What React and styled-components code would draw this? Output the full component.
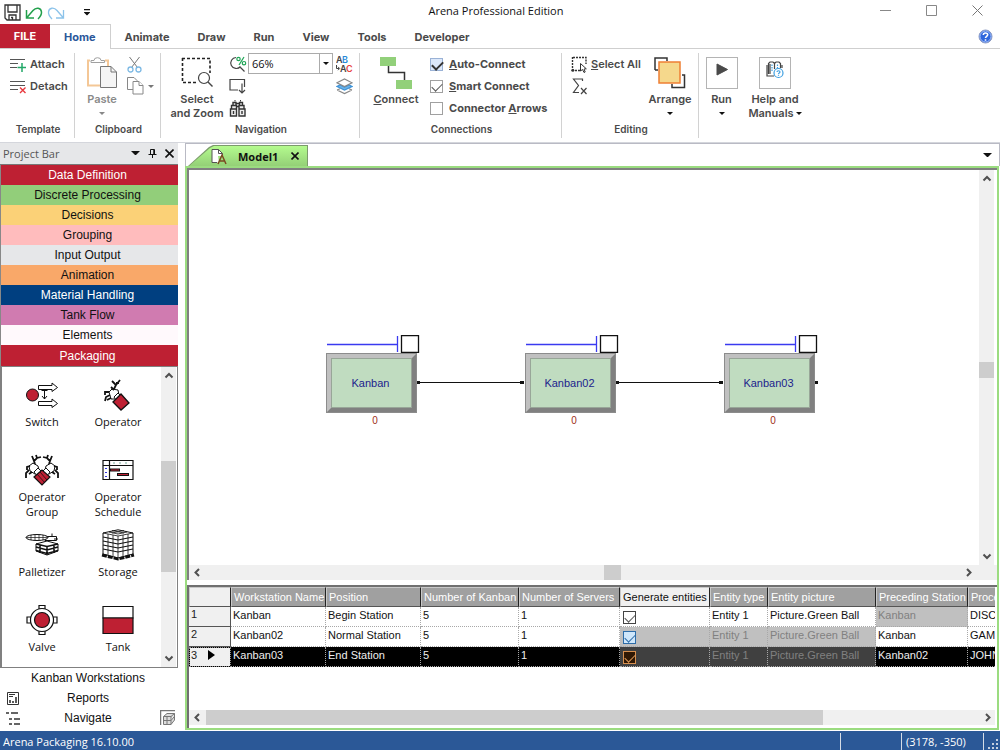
import React from "react"
import styled, { createGlobalStyle, css } from "styled-components";

const GlobalStyle = createGlobalStyle`
  * {
    box-sizing: border-box;
  }
  body {
    margin: 0;
    background-color: white;
    font-family: "Open Sans", "Noto Sans", sans-serif;
    font-size: 11px;
    color: #222;
  }
  button, select, input {
    font: inherit;
    color: inherit;
    margin: 0;
  }
  button {
    padding: 0;
    border: none;
    background: none;
  }
  svg {
    display: block;
    flex: none;
  }
`;

const Page = styled.div`
  display: flex;
  flex-direction: column;
  min-height: 100vh;
  overflow: hidden;
`;

/* title bar */

const TitleBar = styled.header`
  display: grid;
  grid-template-columns: 1fr auto 1fr;
  height: 24px;
  padding-left: 4px;
`;
const QuickAccess = styled.div`
  display: flex;
  align-items: center;
  gap: 4px;
`;
const Title = styled.h1`
  margin: 0;
  padding-right: 12px;
  font-size: 11px;
  font-weight: 400;
  line-height: 22px;
  color: #111;
`;
const WindowButtons = styled.div`
  display: flex;
  justify-content: flex-end;
`;
const WindowButton = styled.button`
  display: flex;
  align-items: center;
  justify-content: center;
  width: ${(p) => p.$width || 46}px;
  height: 21px;
`;

/* ribbon */

const TabRow = styled.nav`
  display: flex;
  height: 25px;
  border-bottom: 1px solid #cfcfcf;
  font-family: Inter, sans-serif;
  font-weight: 700;
  color: #4a4a4a;
`;
const FileTab = styled.button`
  width: 50px;
  height: 24px;
  background-color: #be2033;
  color: white;
`;
const Tab = styled.button`
  height: 25px;
  padding: 0 14px;
  ${(p) => p.$active && css`
    background-color: white;
    border: 1px solid #cfcfcf;
    border-width: 1px 1px 0 0;
    color: #2b579a;
  `}
`;
const HelpButton = styled.button`
  margin-left: auto;
  padding-right: 7px;
`;
const Ribbon = styled.div`
  display: flex;
  height: 94px;
  padding-top: 4px;
  padding-bottom: 4px;
  border-bottom: 1px solid #d4d6dc;
  font-family: Inter, sans-serif;
  font-weight: 600;
  color: #4a4a4a;
`;
const Group = styled.section`
  display: flex;
  flex-direction: column;
  flex: none;
  width: ${(p) => p.$width}px;
  border-right: ${(p) => (p.$last ? "none" : "1px solid #d2d2d2")};
`;
const GroupBody = styled.div`
  display: flex;
  flex: 1;
  padding-left: ${(p) => p.$pad}px;
`;
const GroupLabel = styled.div`
  padding-left: 2px;
  font-size: 10px;
  line-height: 18px;
  text-align: center;
`;
const Column = styled.div`
  display: flex;
  flex-direction: column;
  align-items: flex-start;
  width: ${(p) => p.$width}px;
  margin-left: ${(p) => (p.$gap ? 6 : 0)}px;
`;
const SmallButton = styled.button`
  display: flex;
  align-items: center;
  gap: 4px;
  height: 22px;
  white-space: nowrap;
`;
const BigButton = styled.button`
  display: flex;
  flex-direction: column;
  align-items: center;
  width: ${(p) => p.$width}px;
  padding-top: 4px;
  line-height: 14px;
  color: ${(p) => (p.$disabled ? "#8a8a8a" : "inherit")};
`;
const IconSlot = styled.span`
  display: flex;
  align-items: flex-start;
  justify-content: center;
  height: 35px;
`;
const ArrowLine = styled.span`
  display: flex;
  align-items: center;
  gap: 2px;
  height: 14px;
  white-space: nowrap;
`;
const Frame = styled.span`
  display: flex;
  align-items: flex-start;
  justify-content: center;
  width: 32px;
  height: 32px;
  padding-top: 3px;
  border: 1px solid #b4b4b4;
`;
const ZoomBox = styled.div`
  position: relative;
  display: flex;
`;
const ZoomSelect = styled.select`
  appearance: none;
  width: 85px;
  height: 21px;
  padding: 0 3px;
  border: 1px solid #ababab;
  border-radius: 0;
  background-color: white;
  font-family: "Open Sans", sans-serif;
  font-weight: 400;
  color: #111;
`;
const SelectArrow = styled.span`
  position: absolute;
  top: 0;
  right: 0;
  display: flex;
  align-items: center;
  justify-content: center;
  width: 14px;
  height: 21px;
  border: 1px solid #ababab;
  pointer-events: none;
`;
const CheckRow = styled.label`
  display: flex;
  align-items: center;
  gap: 6px;
  height: 22px;
  font-weight: 700;
  white-space: nowrap;
`;
const Check = styled.input`
  appearance: none;
  position: relative;
  flex: none;
  width: 13px;
  height: 13px;
  border: 1px solid ${(p) => p.$line || "#a0a0a0"};
  background-color: ${(p) => p.$fill || "white"};
  &:checked::after {
    content: "";
    position: absolute;
    left: 1px;
    top: 2px;
    width: 9px;
    height: 5px;
    border: solid ${(p) => p.$mark || "#555"};
    border-width: 0 0 ${(p) => (p.$bold ? 2 : 1)}px ${(p) => (p.$bold ? 2 : 1)}px;
    transform: rotate(-45deg);
  }
`;

/* project bar */

const Workspace = styled.main`
  display: flex;
  flex: 1;
`;
const ProjectBar = styled.aside`
  display: flex;
  flex-direction: column;
  flex: none;
  width: 178px;
  margin-right: 7px;
  padding-bottom: 3px;
`;
const BarHeader = styled.div`
  display: flex;
  align-items: center;
  gap: 8px;
  height: 22px;
  padding: 0 4px 1px 3px;
  background-color: #e6e7e9;
  border-bottom: 1px solid #777;
`;
const BarTitle = styled.span`
  flex: 1;
  color: #555;
`;
const PanelButton = styled.button`
  display: block;
  width: 100%;
  height: ${(p) => p.$h || 20}px;
  border-left: 1px solid #888;
  background-color: ${(p) => p.$bg};
  color: ${(p) => p.$fg || "#111"};
  padding-right: 4px;
  font-family: "Liberation Sans", Arial, sans-serif;
  font-size: 12px;
`;
const ModulePanel = styled.div`
  display: flex;
  flex: 1;
  border: solid #808080;
  border-width: 1px 1px 1px 2px;
  padding-right: 1px;
  background-color: white;
`;
const ModuleGrid = styled.div`
  flex: 1;
  display: grid;
  grid-template-columns: 76px 76px;
  grid-auto-rows: 75px;
  padding: 0 2px;
`;
const Module = styled.button`
  display: flex;
  flex-direction: column;
  align-items: center;
  gap: 3px;
  padding-top: 12px;
  line-height: 15px;
  color: #111;
`;
const BottomRow = styled.div`
  display: flex;
  align-items: center;
  height: 20px;
  padding: 0 2px 0 6px;
`;
const BottomIcon = styled.span`
  width: 16px;
`;
const BottomButton = styled.button`
  flex: 1;
  padding-right: 6px;
  font-family: "Liberation Sans", Arial, sans-serif;
  font-size: 12px;
  color: #111;
`;

/* document */

const Document = styled.section`
  display: flex;
  flex-direction: column;
  flex: 1;
  min-width: 0;
`;
const DocTabs = styled.div`
  display: flex;
  align-items: flex-end;
  justify-content: space-between;
  height: 23px;
  padding: 0 7px 0 2px;
  border: solid #b9bac4;
  border-width: 1px 1px 0 1px;
`;
const DocTabEdge = styled.div`
  padding: 1px 1px 0 1px;
  background-color: #7c9a6c;
  clip-path: polygon(0 100%, 21px 2px, 25px 0, 100% 0, 100% 100%);
`;
const DocTab = styled.div`
  display: flex;
  align-items: center;
  width: 118px;
  height: 20px;
  padding-left: 22px;
  background: linear-gradient(#b4fb8e, #94d077);
  clip-path: polygon(0 100%, 21px 2px, 25px 0, 100% 0, 100% 100%);
  font-weight: 700;
  color: #111;
`;
const DocName = styled.span`
  margin: 0 13px 0 10px;
`;
const DocMenu = styled.button`
  height: 22px;
`;
const DocFrame = styled.div`
  display: flex;
  flex-direction: column;
  flex: 1;
  min-width: 0;
  margin-right: 1px;
  margin-bottom: 1px;
  border: 2px solid #9bdc80;
`;
const CanvasPane = styled.div`
  display: flex;
  flex: 1;
  border: solid #808080;
  border-width: 2px 0 0 2px;
  padding-right: 3px;
  background-color: white;
`;
const Canvas = styled.div`
  position: relative;
  flex: 1;
  min-width: 0;
  background-color: white;
`;
const Wires = styled.svg`
  position: absolute;
  left: 0;
  top: 0;
`;
const Node = styled.div`
  position: absolute;
  left: ${(p) => p.$x}px;
  top: 165px;
  width: 94px;
`;
const NodeBox = styled.div`
  display: flex;
  align-items: center;
  justify-content: center;
  width: 91px;
  height: 60px;
  padding-right: 2px;
  border: 5px solid;
  border-color: #c0c0c0 #808080 #808080 #c0c0c0;
  outline: 1px solid #8c8c8c;
  outline-offset: -1px;
  box-shadow: inset 0 0 0 1px #98a698;
  background-color: #c0dcc0;
  font-family: "Liberation Sans", Arial, sans-serif;
  color: #1c1c8c;
`;
const NodeCount = styled.div`
  width: 98px;
  text-align: center;
  font-family: "Liberation Sans", Arial, sans-serif;
  font-size: 10px;
  line-height: 15px;
  color: #a03020;
`;
const CanvasScroll = styled.div`
  display: flex;
  border-left: 2px solid #808080;
  padding-right: 20px;
  background-color: #f0f0f0;
`;

/* scroll bars */

const ScrollBar = styled.div`
  display: flex;
  flex: ${(p) => (p.$vertical ? "none" : "1")};
  flex-direction: ${(p) => (p.$vertical ? "column" : "row")};
  background-color: #f0f0f0;
`;
const ScrollArrow = styled.button`
  display: flex;
  align-items: center;
  justify-content: center;
  width: ${(p) => (p.$vertical ? 15 : 17)}px;
  height: ${(p) => (p.$vertical ? 17 : 15)}px;
`;
const Track = styled.div`
  flex: ${(p) => p.$size};
`;
const Thumb = styled.div`
  flex: ${(p) => p.$size};
  background-color: #cdcdcd;
`;

/* spreadsheet */

const SheetPane = styled.div`
  display: flex;
  flex-direction: column;
  height: 143px;
  margin-top: 5px;
  padding: 0 2px 3px 0;
  border: solid #707070;
  border-width: 2px 0 0 2px;
`;
const SheetView = styled.div`
  flex: 1;
  overflow: hidden;
`;
const SheetScroll = styled.div`
  display: flex;
`;
const Sheet = styled.table`
  width: 850px;
  table-layout: fixed;
  border-collapse: separate;
  border-spacing: 0;
  font-family: "Liberation Sans", Arial, sans-serif;
  line-height: 14px;
  white-space: nowrap;
`;
const HeadCell = styled.th`
  height: 20px;
  padding: 0 0 0 2px;
  border: 1px solid #c8c8c8;
  border-right-color: #222;
  border-bottom-color: #555;
  background-color: ${(p) => (p.$active ? "#f0f0f0" : "#a0a0a0")};
  color: ${(p) => (p.$active ? "#111" : "white")};
  font-weight: 400;
  text-align: left;
`;
const RowHead = styled.th`
  height: 20px;
  padding: 0 2px;
  border: solid #555;
  border-width: 0 1px 1px 0;
  background-color: #f0f0f0;
  font-weight: 400;
  text-align: left;
  vertical-align: top;
  ${(p) => p.$current && css`
    padding: 0 1px;
    border: 1px solid black;
    outline: 1px dotted #888;
    outline-offset: -1px;
  `}
`;
const RowMark = styled.span`
  display: flex;
  align-items: center;
  gap: 11px;
`;
const Cell = styled.td`
  height: 20px;
  padding: 1px 2px 0 2px;
  border: dotted #a8a8a8;
  border-width: 0 1px 1px 0;
  vertical-align: top;
  overflow: hidden;
  background-color: ${(p) => (p.$selected ? (p.$off ? "#404040" : "black") : p.$off ? "#c0c0c0" : "white")};
  color: ${(p) => (p.$off ? "#808080" : p.$selected ? "#eee" : "#111")};
`;
const CellCheck = styled(Check)`
  display: block;
  margin: 3px 0 0 1px;
  border-color: ${(p) => p.$line || "#444"};
`;

/* status bar */

const StatusBar = styled.footer`
  display: flex;
  align-items: stretch;
  height: 19px;
  background-color: #2b5897;
  line-height: 21px;
  color: white;
`;
const StatusText = styled.span`
  flex: 1;
  padding-left: 3px;
`;
const StatusCell = styled.span`
  width: ${(p) => p.$width}px;
  margin-top: 2px;
  padding-left: 4px;
  border-left: 1px solid #d5dce6;
  line-height: 18px;
`;

const DownArrow = ({ color = "#111", size = 6 }) => (
  <svg width={size} height={size / 2} viewBox="0 0 6 3"><path d="M0 0H6L3 3Z" fill={color} /></svg>
)

const chevrons = { up: "M1.500 6.500 5 3 8.500 6.500", down: "M1.500 2.500 5 6 8.500 2.500", left: "M6 1 2.500 4.500 6 8", right: "M4 1 7.500 4.500 4 8" }
const Chevron = ({ dir }) => (
  <svg width="10" height="9"><path d={chevrons[dir]} fill="none" stroke="#505050" strokeWidth="2" /></svg>
)

const Scroll = ({ vertical, before, thumb, after }) => (
  <ScrollBar $vertical={vertical}>
    <ScrollArrow $vertical={vertical} aria-label="Scroll back"><Chevron dir={vertical ? "up" : "left"} /></ScrollArrow>
    <Track $size={before} />
    <Thumb $size={thumb} />
    <Track $size={after} />
    <ScrollArrow $vertical={vertical} aria-label="Scroll forward"><Chevron dir={vertical ? "down" : "right"} /></ScrollArrow>
  </ScrollBar>
)

const SaveIcon = () => (
  <svg width="17" height="17" fill="none" stroke="#333" strokeWidth="1.300">
    <path d="M1 1H16V16H3L1 14Z" />
    <path d="M4 1V8H13V1M5 16V11H12V16M7 13.500H8.500V16" />
  </svg>
)
const UndoIcon = () => (
  <svg width="18" height="15" fill="none" stroke="#22a04c" strokeWidth="1.500">
    <path d="M1.500 5V13H9M1.500 13 8 5.500C11 2 16 2.500 16.500 7C16.700 9.500 15 12 13 14" />
  </svg>
)
const RedoIcon = () => (
  <svg width="18" height="15" fill="none" stroke="#8cc3ea" strokeWidth="1.300">
    <path d="M16.500 5V13H9M16.500 13 10 5.500C7 2 2 2.500 1.500 7C1.300 9.500 3 12 5 14" />
  </svg>
)
const CustomizeIcon = () => (
  <svg width="6" height="7"><path d="M0 .7H6M.8 3.500H5.200L3 5.700Z" fill="#111" stroke="#111" strokeWidth="1.200" /></svg>
)
const HelpIcon = () => (
  <svg width="15" height="15">
    <circle cx="7.500" cy="7.500" r="6.500" fill="#2f66dc" stroke="#8a98c0" />
    <circle cx="7.500" cy="7.500" r="5.500" fill="none" stroke="#b9d0ff" strokeWidth=".8" />
    <path d="M5.300 6C5.300 3.300 9.700 3.300 9.700 5.800C9.700 7.300 7.500 7.300 7.500 9M7.500 10.200V11.700" fill="none" stroke="white" strokeWidth="1.600" />
  </svg>
)
const AttachIcon = () => (
  <svg width="16" height="16" fill="none" stroke="#555" strokeWidth="1.200">
    <path d="M0 3.500H15M0 7.500H8M0 11.500H7" />
    <path d="M12 7V16M7.500 11.500H16" stroke="#22a868" strokeWidth="1.500" />
  </svg>
)
const DetachIcon = () => (
  <svg width="16" height="16" fill="none" stroke="#555" strokeWidth="1.200">
    <path d="M0 3.500H15M0 7.500H15M0 11.500H8" />
    <path d="M10 9.500 15.500 15M15.500 9.500 10 15" stroke="#e8383d" strokeWidth="1.400" />
  </svg>
)
const PasteIcon = () => (
  <svg width="32" height="34" fill="none">
    <path d="M4 3.500H2V28.500H14M19 3.500H22V9" stroke="#f4c796" strokeWidth="2" />
    <path d="M5 5.500V3.500H8Q8 .7 11.500 .7T15 3.500H18.500V5.500Z" fill="white" stroke="#a0a0a0" />
    <path d="M14.500 9.500H25L30.500 15V30.500H14.500Z" fill="#f5f5f5" stroke="#777" />
    <path d="M25 9.500V15H30.500" stroke="#777" />
  </svg>
)
const CutIcon = () => (
  <svg width="16" height="17" fill="none">
    <path d="M2.500 1 10.500 11.500M12.500 1 4.500 11.500" stroke="#777" />
    <circle cx="3.500" cy="13.500" r="2.500" stroke="#7db9e4" strokeWidth="1.300" />
    <circle cx="11.500" cy="13.500" r="2.500" stroke="#7db9e4" strokeWidth="1.300" />
  </svg>
)
const CopyIcon = () => (
  <svg width="17" height="18" fill="white" stroke="#888">
    <path d="M.5 .5H7L10 3.500V12.500H.5Z" />
    <path d="M6 4.500H12L16 8.500V17H6Z" />
    <path d="M12 4.500V8.500H16" />
  </svg>
)
const SelectZoomIcon = () => (
  <svg width="32" height="30" fill="none">
    <path d="M1 1.500H29V16M1.500 1V25.500H16" stroke="#222" strokeWidth="1.600" strokeDasharray="3 2" />
    <circle cx="23" cy="21" r="5.500" fill="white" stroke="#444" strokeWidth="1.200" />
    <path d="M27 25 31.500 29.500" stroke="#444" strokeWidth="1.400" />
  </svg>
)
const ZoomPercentIcon = () => (
  <svg width="18" height="16" fill="none">
    <path d="M7 1.500A5.500 5.500 0 1 0 11.500 10.500M11 11 15.500 15.500" stroke="#444" strokeWidth="1.200" />
    <path d="M10 9 15 1" stroke="#1fa556" strokeWidth="1.200" />
    <circle cx="9.500" cy="3" r="1.700" stroke="#1fa556" strokeWidth="1.200" />
    <circle cx="15" cy="7.200" r="1.700" stroke="#1fa556" strokeWidth="1.200" />
  </svg>
)
const ViewDownIcon = () => (
  <svg width="17" height="16" fill="none" stroke="#444" strokeWidth="1.200">
    <path d="M9 12H1V1.500H15.500V9" />
    <path d="M13 5.500V14.500M10 12 13 15 16 12" />
  </svg>
)
const BinocularsIcon = () => (
  <svg width="18" height="17" fill="#eee" stroke="#333" strokeWidth="1.400">
    <path d="M1.500 9H7.500V16H1.500ZM10 9H16V16H10ZM2.500 9V5.500H7.500V9M10 9V5.500H15V9M4 5.500V2.500H7V5.500M10.500 5.500V2.500H13.500V5.500" />
    <path d="M7.500 6.500H10M7 3.500H10.500M4.500 11V14M13 11V14M5.500 .8H6.500M11 .8H12" />
  </svg>
)
const ABIcon = () => (
  <svg width="18" height="18" fontFamily="Inter, sans-serif" fontSize="9" fontWeight="600">
    <text x="0" y="8" fill="#444">A</text>
    <text x="6" y="8" fill="#2789d8">B</text>
    <text x="4" y="17" fill="#444">A</text>
    <text x="10" y="17" fill="#e84040">C</text>
    <path d="M.5 10V13.500H3M2 11.800 3.700 13.500 2 15.200" fill="none" stroke="#444" />
  </svg>
)
const LayersIcon = () => (
  <svg width="17" height="17" fill="none" strokeWidth="1.200">
    <path d="M1 12 8.500 15.500 16 12M1 12 4 10.700M16 12 13 10.700" stroke="#888" />
    <path d="M1 8.500 8.500 12 16 8.500 13 7 8.500 9 4 7Z" fill="#6db3e8" stroke="#3b92d8" />
    <path d="M1 4.800 8.500 1 16 4.800 8.500 8.500Z" fill="white" stroke="#888" />
  </svg>
)
const ConnectIcon = () => (
  <svg width="32" height="32">
    <path d="M8.500 9V15.500H24.500V23" fill="none" stroke="#333" strokeWidth="1.500" />
    <path d="M0 0H16V9H0ZM16 23H32V32H16Z" fill="#92d07a" />
  </svg>
)
const SelectAllIcon = () => (
  <svg width="16" height="17" fill="none">
    <path d="M2 1.500H15V8M1.500 1V12M4 14.500H9" stroke="#333" strokeWidth="1.400" strokeDasharray="2 1" />
    <circle cx="1.800" cy="14.200" r="1.500" fill="#333" />
    <path d="M9.500 7.500V15L11.500 13.500 13 16.500 14.200 16 13 13 15.300 12.800Z" fill="white" stroke="#333" />
  </svg>
)
const SigmaIcon = () => (
  <svg width="18" height="17" fill="none" stroke="#444" strokeWidth="1.200">
    <path d="M11.500 3V1H2.500L7.500 7.500 2.500 14.500H8M10 10 15.500 16M15.500 10 10 16" />
  </svg>
)
const ArrangeIcon = () => (
  <svg width="32" height="32" fill="none">
    <path d="M1 13V1H13V4M4 13H1M28 18H30.500V30.500H18V27" stroke="#333" strokeWidth="1.500" />
    <path d="M5 5H26V26H5Z" fill="#f5d88c" stroke="#ee7f33" strokeWidth="1.500" />
  </svg>
)
const PlayIcon = () => (
  <svg width="14" height="16"><path d="M2 3 12.500 8.500 2 14Z" fill="#4a4a4a" stroke="#4a4a4a" /></svg>
)
const ManualIcon = () => (
  <svg width="18" height="18" fill="none" strokeWidth="1.200">
    <path d="M2.500 13V2.500L4 1H7L8.500 2.500 10 1H13L14.500 2.500V7M8.500 2.500V8M4 3V13M1 4V15H8M16 4V7" stroke="#444" />
    <path d="M6 3.500V10M11.500 3.500V7" stroke="#3c9ee0" strokeDasharray="1.500 1" />
    <circle cx="12.500" cy="12" r="4.500" fill="white" stroke="#3c9ee0" />
    <path d="M11 11C11 9.300 14 9.300 14 11C14 12 12.500 12 12.500 13M12.500 13.800V14.800" stroke="#3c9ee0" />
  </svg>
)
const DocIcon = () => (
  <svg width="17" height="17" fill="none">
    <path d="M8 14.500H1V1.500H7.500L11.500 5.500V8H7Z" fill="white" />
    <path d="M6 14.500H1V1.500H7.500L11.500 5.500V7M7.500 1.500V5.500H11.500" stroke="#555" />
    <path d="M7 16 11 7 15 16M8.500 13H13.500" stroke="#7a4a20" strokeWidth="1.500" />
  </svg>
)

const OperatorIcon = () => (
  <svg width="32" height="32" fill="none" stroke="#111" strokeWidth="1.300">
    <path d="M7 13 10 10 16 11 17 16 13 20 9 20Z" fill="white" strokeWidth="1" />
    <path d="M12 11 9 8M12 10 14 6 10 2M14 6 18 1M14 4 17 4M7 13 3 13 3 16M8 16 4 18 3 22M9 19 5 21" strokeWidth="1.800" />
    <path d="M12 18 16 14 19 17 14 21Z" fill="white" strokeWidth="1" />
    <path d="M11 23 19 15 27 24 19 31Z" fill="#be2033" />
  </svg>
)
const OperatorGroupIcon = () => (
  <svg width="34" height="32" fill="none" stroke="#111" strokeWidth="1.200">
    <path d="M4 12 8 9 13 12 14 16 10 20 5 17ZM30 12 26 9 21 12 20 16 24 20 29 17Z" fill="white" strokeWidth="1" />
    <path d="M10 10 9 7 12 4 16 3M9 7 7 2M12 4 11 1M24 10 25 7 22 4 18 3M25 7 27 2M22 4 23 1M5 12 2 13 2 16M4 16 1 19 1 24M7 18 4 20M29 12 32 13 32 16M30 16 33 19 33 24M27 18 30 20" strokeWidth="1.800" />
    <path d="M9 18 13 14 17 18 12 22ZM25 18 21 14 17 18 22 22Z" fill="white" strokeWidth="1" />
    <path d="M9 23 17 16 25 23 17 31Z" fill="#be2033" />
    <path d="M12 20 20 29M15 18 22 26" strokeWidth=".8" />
  </svg>
)
const SwitchIcon = () => (
  <svg width="32" height="32" fill="white" stroke="#111">
    <path d="M12.500 6.500H26V4L31.500 8.500 26 12.500V10.500H12.500ZM12.500 22.500H26V20L31.500 24.500 26 28.500V26.500H12.500Z" />
    <path d="M18.500 11V20M15.500 11.500H21.500M16 17 18.500 20 21 17" fill="none" />
    <circle cx="6.500" cy="16" r="6" fill="#be2033" />
  </svg>
)
const ScheduleIcon = () => (
  <svg width="32" height="32" fill="none" stroke="#111">
    <path d="M1 6.500H31V25.500H1ZM1 11.500H31M7.500 6.500V25.500" strokeWidth="1.200" />
    <path d="M8 16H18M15 20.500H27" strokeWidth="3" />
    <path d="M9 16H17M16 20.500H26" stroke="#be2033" strokeWidth="1.200" />
    <path d="M3 14.500H5M3 18.500H5M3 22.500H5" stroke="#33d" />
    <path d="M12 8V10M18 8V10M24 8V10" stroke="#7a9" />
  </svg>
)
const PalletizerIcon = () => (
  <svg width="34" height="32" fill="white" stroke="#111">
    <path d="M20 7.500H31.500V11.500H20ZM27 4.500V7.500M29 10H33" />
    <ellipse cx="12" cy="8.500" rx="11" ry="3" />
    <path d="M6 6V11M10 5.500V11.500M14 5.500V11.500M18 6V11M1 8.500H23" fill="none" strokeWidth=".7" />
    <path d="M11 15 22 12 33 15V22L22 26 11 22Z" />
    <path d="M11 15 22 17.500 33 15M11 18 22 21 33 18M11 21.500 22 24.500 33 21.500M15 16V24M22 18V26M29 16V24" fill="none" strokeWidth="1.600" />
  </svg>
)
const StorageIcon = () => (
  <svg width="34" height="32" fill="white" stroke="#111">
    <path d="M2 4 17 .8 32 4V25L17 29 2 25Z" />
    <path d="M2 4 17 7 32 4M8 3 17 5 26 3M11 1.500 23 4M23 1.500 11 4" fill="none" strokeWidth=".8" />
    <path d="M2 8 17 11 32 8M2 12 17 15 32 12M2 16 17 19 32 16M2 20 17 23 32 20" fill="none" strokeWidth="1.200" />
    <path d="M7 5V26M12 6V27M17 7V29M22 6V27M27 5V26" fill="none" strokeWidth=".8" />
    <path d="M1 26 17 30 33 26" fill="none" strokeWidth="3" strokeDasharray="5 1" />
  </svg>
)
const ValveIcon = () => (
  <svg width="32" height="32" fill="white" stroke="#111" strokeWidth="1.200">
    <path d="M13 1.500H19V5H13ZM13 27H19V30.500H13ZM1 13H5V19H1ZM27 13H31V19H27Z" />
    <circle cx="16" cy="16" r="11.500" />
    <circle cx="16" cy="16" r="7.500" fill="#be2033" />
  </svg>
)
const TankIcon = () => (
  <svg width="32" height="32" stroke="#111" strokeWidth="1.200">
    <path d="M1 2.500H31V14H1Z" fill="white" />
    <path d="M1 14H31V29.500H1Z" fill="#be2033" />
  </svg>
)
const ReportIcon = () => (
  <svg width="14" height="15" fill="none" stroke="#333">
    <path d="M1.500 1.500H12.500V13.500H1.500ZM3 3.500H9M3 5.500H7" />
    <path d="M4 12V9M7 12V10M10 12V6" strokeWidth="1.600" />
  </svg>
)
const NavigateIcon = () => (
  <svg width="15" height="15" stroke="#333" strokeWidth="1.500">
    <path d="M0 2H3M5 2H12M3 8H6M8 8H14M3 13H6M8 13H14" />
  </svg>
)
const NavigatorSmallIcon = () => (
  <svg width="16" height="16" fill="none" stroke="#777">
    <path d="M.5 15V.5H15" strokeWidth="1.500" />
    <path d="M3.500 6.500 7 3.500H14.500V10L11 14.500H3.500ZM3.500 6.500H11V14.500M11 6.500 14.500 3.500M3.500 10.500H11L14 7M7 6.500V14.500" fill="#ddd" />
  </svg>
)

const categories = [
  { name: "Data Definition", bg: "#be2033", fg: "white" },
  { name: "Discrete Processing", bg: "#92ce7a" },
  { name: "Decisions", bg: "#fbd177" },
  { name: "Grouping", bg: "#ffbcbd" },
  { name: "Input Output", bg: "#e6e7e9" },
  { name: "Animation", bg: "#f9a869" },
  { name: "Material Handling", bg: "#003f80", fg: "white" },
  { name: "Tank Flow", bg: "#d07bb0" },
  { name: "Elements", bg: "#fff9fc" },
  { name: "Packaging", bg: "#be2033", fg: "white", h: 21 },
]

const modules = [
  { name: "Switch", icon: <SwitchIcon /> },
  { name: "Operator", icon: <OperatorIcon /> },
  { name: "Operator Group", icon: <OperatorGroupIcon /> },
  { name: "Operator Schedule", icon: <ScheduleIcon /> },
  { name: "Palletizer", icon: <PalletizerIcon /> },
  { name: "Storage", icon: <StorageIcon /> },
  { name: "Valve", icon: <ValveIcon /> },
  { name: "Tank", icon: <TankIcon /> },
]

const nodes = [
  { name: "Kanban", x: 137 },
  { name: "Kanban02", x: 336 },
  { name: "Kanban03", x: 535 },
]

const columns = [
  { name: "Workstation Name", width: 95 },
  { name: "Position", width: 95 },
  { name: "Number of Kanban", width: 98 },
  { name: "Number of Servers", width: 101 },
  { name: "Generate entities", width: 90 },
  { name: "Entity type", width: 58 },
  { name: "Entity picture", width: 108 },
  { name: "Preceding Station", width: 92 },
  { name: "Process", width: 71 },
]

const rows = [
  { cells: ["Kanban", "Begin Station", "5", "1", null, "Entity 1", "Picture.Green Ball", "Kanban", "DISCrete"], off: [7], check: {} },
  { cells: ["Kanban02", "Normal Station", "5", "1", null, "Entity 1", "Picture.Green Ball", "Kanban", "GAMMa"], off: [4, 5, 6], check: { $line: "#2d6ca8", $fill: "#cfe7fb", $mark: "#2d6ca8" } },
  { cells: ["Kanban03", "End Station", "5", "1", null, "Entity 1", "Picture.Green Ball", "Kanban02", "JOHNson"], off: [4, 5, 6], check: { $line: "#d8904f", $fill: "#301804", $mark: "#e09a58" }, selected: true },
]

const RibbonBar = () => (
  <Ribbon>
    <Group $width={75}>
      <GroupBody $pad={10}>
        <Column>
          <SmallButton><AttachIcon />Attach</SmallButton>
          <SmallButton><DetachIcon />Detach</SmallButton>
        </Column>
      </GroupBody>
      <GroupLabel>Template</GroupLabel>
    </Group>
    <Group $width={86}>
      <GroupBody $pad={8}>
        <BigButton $width={38} $disabled>
          <IconSlot><PasteIcon /></IconSlot>
          Paste
          <ArrowLine><DownArrow color="#888" /></ArrowLine>
        </BigButton>
        <Column $width={30} $gap>
          <SmallButton aria-label="Cut"><CutIcon /></SmallButton>
          <SmallButton aria-label="Copy"><CopyIcon /><DownArrow color="#777" /></SmallButton>
        </Column>
      </GroupBody>
      <GroupLabel>Clipboard</GroupLabel>
    </Group>
    <Group $width={199}>
      <GroupBody $pad={4}>
        <BigButton $width={64}>
          <IconSlot><SelectZoomIcon /></IconSlot>
          Select<br />and Zoom
        </BigButton>
        <Column $width={19}>
          <SmallButton aria-label="Zoom factor"><ZoomPercentIcon /></SmallButton>
          <SmallButton aria-label="Previous view"><ViewDownIcon /></SmallButton>
          <SmallButton aria-label="Find"><BinocularsIcon /></SmallButton>
        </Column>
        <Column $width={88}>
          <ZoomBox>
            <ZoomSelect aria-label="Zoom" defaultValue="66%">
              <option>66%</option>
              <option>100%</option>
            </ZoomSelect>
            <SelectArrow><DownArrow /></SelectArrow>
          </ZoomBox>
        </Column>
        <Column>
          <SmallButton aria-label="Replace"><ABIcon /></SmallButton>
          <SmallButton aria-label="Layers"><LayersIcon /></SmallButton>
        </Column>
      </GroupBody>
      <GroupLabel>Navigation</GroupLabel>
    </Group>
    <Group $width={202}>
      <GroupBody $pad={8}>
        <BigButton $width={56}>
          <IconSlot><ConnectIcon /></IconSlot>
          <span><u>C</u>onnect</span>
        </BigButton>
        <Column $width={130} $gap>
          <CheckRow>
            <Check type="checkbox" defaultChecked $bold $line="#9ab2d6" $fill="#dce8fa" $mark="#333" />
            <span><u>A</u>uto-Connect</span>
          </CheckRow>
          <CheckRow>
            <Check type="checkbox" defaultChecked />
            <span><u>S</u>mart Connect</span>
          </CheckRow>
          <CheckRow>
            <Check type="checkbox" />
            <span>Connector <u>A</u>rrows</span>
          </CheckRow>
        </Column>
      </GroupBody>
      <GroupLabel>Connections</GroupLabel>
    </Group>
    <Group $width={137}>
      <GroupBody $pad={9}>
        <Column $width={74}>
          <SmallButton><SelectAllIcon /><span><u>S</u>elect All</span></SmallButton>
          <SmallButton aria-label="Expression builder"><SigmaIcon /></SmallButton>
        </Column>
        <BigButton $width={50}>
          <IconSlot><ArrangeIcon /></IconSlot>
          Arrange
          <ArrowLine><DownArrow /></ArrowLine>
        </BigButton>
      </GroupBody>
      <GroupLabel>Editing</GroupLabel>
    </Group>
    <Group $width={120} $last>
      <GroupBody $pad={4}>
        <BigButton $width={37}>
          <IconSlot><Frame><PlayIcon /></Frame></IconSlot>
          Run
          <ArrowLine><DownArrow /></ArrowLine>
        </BigButton>
        <BigButton $width={70}>
          <IconSlot><Frame><ManualIcon /></Frame></IconSlot>
          Help and
          <ArrowLine>Manuals<DownArrow /></ArrowLine>
        </BigButton>
      </GroupBody>
    </Group>
  </Ribbon>
)

const DataSheet = () => (
  <SheetPane>
    <SheetView>
      <Sheet>
        <colgroup>
          <col width={42} />
          {columns.map((c) => <col key={c.name} width={c.width} />)}
        </colgroup>
        <thead>
          <tr>
            <HeadCell $active />
            {columns.map((c, i) => <HeadCell key={c.name} $active={i === 4}>{c.name}</HeadCell>)}
          </tr>
        </thead>
        <tbody>
          {rows.map((row, r) => (
            <tr key={r}>
              <RowHead $current={row.selected}>
                <RowMark>
                  {r + 1}
                  {row.selected && <svg width="7" height="10"><path d="M0 0 7 5 0 10Z" /></svg>}
                </RowMark>
              </RowHead>
              {row.cells.map((value, i) => (
                <Cell key={i} $off={row.off.includes(i)} $selected={row.selected}>
                  {value === null
                    ? <CellCheck type="checkbox" defaultChecked aria-label="Generate entities" {...row.check} />
                    : value}
                </Cell>
              ))}
            </tr>
          ))}
        </tbody>
      </Sheet>
    </SheetView>
    <SheetScroll>
      <Scroll before={0} thumb={617} after={155} />
    </SheetScroll>
  </SheetPane>
)

const App = () => {
  return (
    <Page>
      <GlobalStyle />
      <TitleBar>
        <QuickAccess>
          <button aria-label="Save"><SaveIcon /></button>
          <button aria-label="Undo"><UndoIcon /></button>
          <button aria-label="Redo"><RedoIcon /></button>
          <WindowButton aria-label="Customize" $width={36}><CustomizeIcon /></WindowButton>
        </QuickAccess>
        <Title>Arena Professional Edition</Title>
        <WindowButtons>
          <WindowButton aria-label="Minimize">
            <svg width="11" height="11"><path d="M0 5.500H11" stroke="#888" /></svg>
          </WindowButton>
          <WindowButton aria-label="Maximize">
            <svg width="11" height="11"><path d="M.5 .5H10.500V10.500H.5Z" fill="none" stroke="#888" /></svg>
          </WindowButton>
          <WindowButton aria-label="Close">
            <svg width="11" height="11"><path d="M.5 .5 10.500 10.500M10.500 .5 .5 10.500" stroke="#777" /></svg>
          </WindowButton>
        </WindowButtons>
      </TitleBar>
      <TabRow>
        <FileTab>FILE</FileTab>
        <Tab $active>Home</Tab>
        <Tab>Animate</Tab>
        <Tab>Draw</Tab>
        <Tab>Run</Tab>
        <Tab>View</Tab>
        <Tab>Tools</Tab>
        <Tab>Developer</Tab>
        <HelpButton aria-label="Help"><HelpIcon /></HelpButton>
      </TabRow>
      <RibbonBar />
      <Workspace>
        <ProjectBar>
          <BarHeader>
            <BarTitle>Project Bar</BarTitle>
            <button aria-label="Menu"><DownArrow size={9} /></button>
            <button aria-label="Pin">
              <svg width="9" height="9" fill="none" stroke="#111"><path d="M2.500 5V.5H6.500V5M.5 5.500H8.500M4.500 6V9" /><path d="M6 1V5" strokeWidth="1.500" /></svg>
            </button>
            <button aria-label="Close">
              <svg width="9" height="9"><path d="M.5 .5 8.500 8.500M8.500 .5 .5 8.500" stroke="#111" strokeWidth="1.600" /></svg>
            </button>
          </BarHeader>
          {categories.map((c) => (
            <PanelButton key={c.name} $bg={c.bg} $fg={c.fg} $h={c.h}>{c.name}</PanelButton>
          ))}
          <ModulePanel>
            <ModuleGrid>
              {modules.map((m) => (
                <Module key={m.name}>
                  {m.icon}
                  {m.name}
                </Module>
              ))}
            </ModuleGrid>
            <Scroll vertical before={77} thumb={110} after={78} />
          </ModulePanel>
          <BottomRow>
            <BottomIcon />
            <BottomButton>Kanban Workstations</BottomButton>
            <BottomIcon />
          </BottomRow>
          <BottomRow>
            <BottomIcon><ReportIcon /></BottomIcon>
            <BottomButton>Reports</BottomButton>
            <BottomIcon />
          </BottomRow>
          <BottomRow>
            <BottomIcon><NavigateIcon /></BottomIcon>
            <BottomButton>Navigate</BottomButton>
            <BottomIcon><NavigatorSmallIcon /></BottomIcon>
          </BottomRow>
        </ProjectBar>
        <Document>
          <DocTabs>
            <DocTabEdge>
              <DocTab>
                <DocIcon />
                <DocName>Model1</DocName>
                <button aria-label="Close model">
                  <svg width="8" height="8"><path d="M.5 .5 7.500 7.500M7.500 .5 .5 7.500" stroke="#111" strokeWidth="1.600" /></svg>
                </button>
              </DocTab>
            </DocTabEdge>
            <DocMenu aria-label="Open models"><DownArrow size={9} /></DocMenu>
          </DocTabs>
          <DocFrame>
            <CanvasPane>
              <Canvas>
                <Wires width="700" height="380" stroke="#111">
                  <path d="M229 212.500H335M428 212.500H534" strokeWidth="1.200" />
                  <path d="M228 212.500H231M331 212.500H335M427 212.500H430M530 212.500H534M626 212.500H629" strokeWidth="3" />
                </Wires>
                {nodes.map((n) => (
                  <Node key={n.name} $x={n.x}>
                    <svg width="94" height="18" fill="none">
                      <path d="M1 9.500H72M71.500 1V17" stroke="#3a3af0" strokeWidth="1.300" />
                      <path d="M75.500 .7H92.500V17.500H75.500Z" stroke="#111" strokeWidth="1.300" />
                    </svg>
                    <NodeBox>{n.name}</NodeBox>
                    <NodeCount>0</NodeCount>
                  </Node>
                ))}
              </Canvas>
              <Scroll vertical before={175} thumb={17} after={170} />
            </CanvasPane>
            <CanvasScroll>
              <Scroll before={399} thumb={17} after={340} />
            </CanvasScroll>
            <DataSheet />
          </DocFrame>
        </Document>
      </Workspace>
      <StatusBar>
        <StatusText>Arena Packaging 16.10.00</StatusText>
        <StatusCell $width={61} />
        <StatusCell $width={82}>(3178, -350)</StatusCell>
        <StatusCell $width={17}>
          <svg width="11" height="16" fill="#c5cfdf"><path d="M8 6H10V8H8ZM4 10H6V12H4ZM8 10H10V12H8ZM0 14H2V16H0ZM4 14H6V16H4ZM8 14H10V16H8Z" /></svg>
        </StatusCell>
      </StatusBar>
    </Page>
  )
}
export default App
